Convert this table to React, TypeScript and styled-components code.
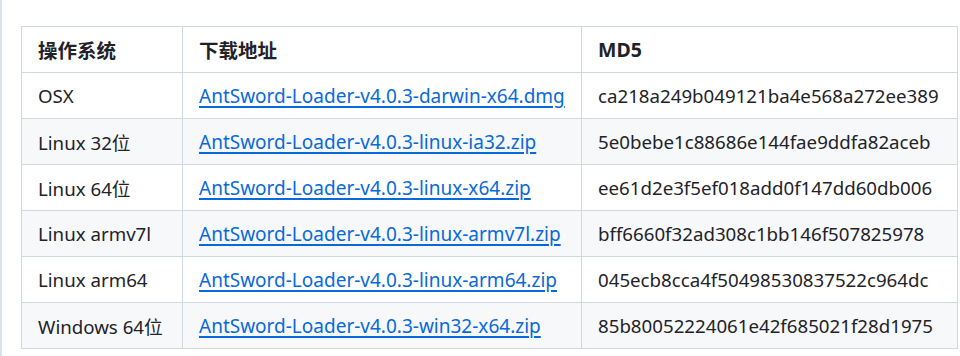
import styled, { createGlobalStyle } from 'styled-components';

const GlobalStyle = createGlobalStyle`
  html, body {
    margin: 0;
    padding: 0;
    background: #ffffff;
  }
  body {
    font-family: "Noto Sans", "Noto Sans CJK SC", sans-serif;
    color: #1f2328;
  }
`;

const Page = styled.div`
  height: 356px;
  overflow: hidden;
  border-left: 2px solid #dde2e8;
  padding-left: 19px;
  box-sizing: border-box;
`;

const Heading = styled.h3`
  margin: -22px 0 0 1px;
  height: 24px;
  font-size: 20px;
  line-height: 24px;
  font-weight: 700;
`;

const Table = styled.table`
  border-collapse: collapse;
  table-layout: fixed;
  width: 936px;
  margin-top: 24px;
  font-size: 18.7px;
`;

const Row = styled.tr<{ $striped?: boolean }>`
  height: 46px;
  background: ${(p) => (p.$striped ? '#f6f8fa' : '#ffffff')};
`;

const HeadCell = styled.th`
  border: 1px solid #d1d9e0;
  padding: 0 16px;
  text-align: left;
  font-size: 19.5px;
  font-weight: 700;
  white-space: nowrap;
`;

const Cell = styled.td`
  border: 1px solid #d1d9e0;
  padding: 0 16px;
  white-space: nowrap;
`;

const FileLink = styled.a`
  color: #0969da;
  font-size: 19px;
  text-decoration: underline;
  text-decoration-thickness: 2px;
  text-underline-offset: 3px;
`;

const releases = [
  { os: 'OSX', file: 'AntSword-Loader-v4.0.3-darwin-x64.dmg', md5: 'ca218a249b049121ba4e568a272ee389' },
  { os: 'Linux 32位', file: 'AntSword-Loader-v4.0.3-linux-ia32.zip', md5: '5e0bebe1c88686e144fae9ddfa82aceb' },
  { os: 'Linux 64位', file: 'AntSword-Loader-v4.0.3-linux-x64.zip', md5: 'ee61d2e3f5ef018add0f147dd60db006' },
  { os: 'Linux armv7l', file: 'AntSword-Loader-v4.0.3-linux-armv7l.zip', md5: 'bff6660f32ad308c1bb146f507825978' },
  { os: 'Linux arm64', file: 'AntSword-Loader-v4.0.3-linux-arm64.zip', md5: '045ecb8cca4f50498530837522c964dc' },
  { os: 'Windows 64位', file: 'AntSword-Loader-v4.0.3-win32-x64.zip', md5: '85b80052224061e42f685021f28d1975' },
];

export default function App() {
  return (
    <>
      <GlobalStyle />
      <Page>
        <Heading>下载</Heading>
        <Table>
          <colgroup>
            <col style={{ width: 161 }} />
            <col style={{ width: 399 }} />
            <col style={{ width: 376 }} />
          </colgroup>
          <thead>
            <Row>
              <HeadCell>操作系统</HeadCell>
              <HeadCell>下载地址</HeadCell>
              <HeadCell>MD5</HeadCell>
            </Row>
          </thead>
          <tbody>
            {releases.map((r, i) => (
              <Row key={r.file} $striped={i % 2 === 1}>
                <Cell>{r.os}</Cell>
                <Cell>
                  <FileLink href="#">{r.file}</FileLink>
                </Cell>
                <Cell>{r.md5}</Cell>
              </Row>
            ))}
          </tbody>
        </Table>
      </Page>
    </>
  );
}
